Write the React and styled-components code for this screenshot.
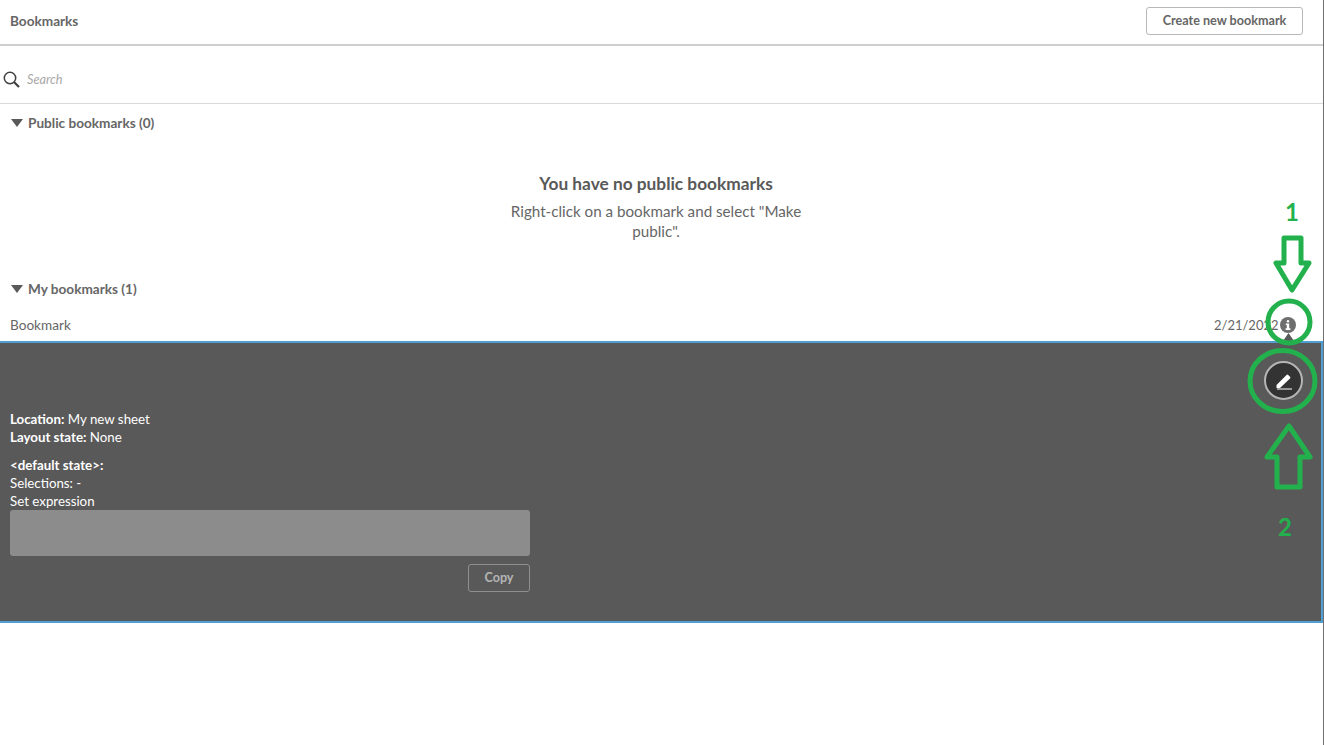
import React from "react";
import styled, { createGlobalStyle } from "styled-components";

const Global = createGlobalStyle`
  html, body { margin: 0; padding: 0; background: #fff; }
  body { font-family: "Lato", "Noto Sans", sans-serif; color: #595959; }
  * { box-sizing: border-box; }
`;

const Page = styled.div`
  position: relative;
  width: 1324px;
  height: 745px;
  overflow: hidden;
  background: #fff;
  border-right: 1px solid #6e6e6e;
`;

const Main = styled.div`
  width: 1323px;
  height: 100%;
  display: flex;
  flex-direction: column;
`;

const Header = styled.header`
  height: 46px;
  flex: none;
  display: flex;
  align-items: flex-start;
  justify-content: space-between;
  padding: 7px 20px 0 10px;
  border-bottom: 2px solid #cfcfcf;
`;

const Title = styled.h1`
  margin: 6px 0 0;
  font-size: 13.6px;
  line-height: 16px;
  font-weight: 700;
  color: #666;
`;

const CreateButton = styled.button`
  width: 157px;
  height: 28px;
  padding: 0;
  background: #fff;
  border: 1px solid #b8b8b8;
  border-radius: 3px;
  font: 700 12.6px/16px "Lato", sans-serif;
  color: #666;
`;

const SearchBar = styled.div`
  height: 58px;
  flex: none;
  display: flex;
  align-items: center;
  gap: 7px;
  padding: 9px 0 0 3px;
  border-bottom: 1px solid #d9d9d9;
`;

const SearchText = styled.span`
  font-size: 12.7px;
  font-style: italic;
  color: #a8a8a8;
`;

const Section = styled.section`
  display: flex;
  flex-direction: column;
`;

const SectionHead = styled.div`
  height: 20px;
  margin-top: ${(p) => p.$top || 0}px;
  display: flex;
  align-items: center;
  gap: 5px;
  padding-left: 11px;
  font-size: 13.6px;
  font-weight: 700;
  color: #666;
`;

const Caret = styled.span`
  width: 0;
  height: 0;
  border-left: 6px solid transparent;
  border-right: 6px solid transparent;
  border-top: 8px solid #595959;
`;

const Empty = styled.div`
  height: 146px;
  padding: 40px 11px 0 0;
  display: flex;
  flex-direction: column;
  align-items: center;
`;

const EmptyTitle = styled.div`
  font-size: 17.3px;
  line-height: 22px;
  font-weight: 700;
  color: #595959;
`;

const EmptyText = styled.div`
  width: 310px;
  margin-top: 6px;
  font-size: 15.2px;
  line-height: 20px;
  text-align: center;
  color: #666;
`;

const Row = styled.div`
  height: 33px;
  margin-top: 9px;
  flex: none;
  display: flex;
  align-items: center;
  justify-content: space-between;
  padding: 1px 27px 0 10px;
  font-size: 13.6px;
  color: #666;
  position: relative;
`;

const RowMeta = styled.div`
  display: flex;
  align-items: center;
`;

const RowDate = styled.span`
  width: 66px;
  font-size: 13px;
  white-space: nowrap;
`;

const InfoIcon = styled.span`
  width: 16px;
  height: 16px;
  border-radius: 50%;
  background: #6e6e6e;
  display: flex;
  align-items: center;
  justify-content: center;
`;

const Notch = styled.span`
  position: absolute;
  z-index: 1;
  left: 1283px;
  bottom: 0;
  width: 11px;
  height: 8px;
  background: #595959;
  clip-path: polygon(50% 0, 100% 100%, 0 100%);
`;

const Panel = styled.div`
  height: 282px;
  flex: none;
  background: #595959;
  border: solid #4f9fd3;
  border-width: 2px 2px 2px 0;
  position: relative;
  padding: 67px 0 0 10px;
  color: #fff;
  font-size: 13.3px;
  line-height: 18px;
`;

const EditButton = styled.button`
  position: absolute;
  right: 18px;
  top: 18px;
  width: 39px;
  height: 39px;
  padding: 0;
  border-radius: 50%;
  background: #333;
  border: 2px solid #b5b5b5;
  display: flex;
  align-items: center;
  justify-content: center;
`;

const Line = styled.div`
  white-space: nowrap;
`;

const Strong = styled.b`
  font-weight: 700;
`;

const Group = styled.div`
  margin-top: ${(p) => p.$gap || 0}px;
`;

const ExprBox = styled.div`
  width: 520px;
  height: 46px;
  background: #8c8c8c;
  border-radius: 3px;
`;

const CopyRow = styled.div`
  width: 520px;
  margin-top: 8px;
  display: flex;
  justify-content: flex-end;
`;

const CopyButton = styled.button`
  width: 62px;
  height: 28px;
  padding: 0;
  background: transparent;
  border: 1px solid #8f8f8f;
  border-radius: 3px;
  font: 700 12.6px/16px "Lato", sans-serif;
  color: #b5b5b5;
`;

const Overlay = styled.svg`
  position: absolute;
  inset: 0;
  z-index: 2;
  pointer-events: none;
`;

const Num = styled.span`
  position: absolute;
  z-index: 2;
  left: ${(p) => p.$x}px;
  top: ${(p) => p.$y}px;
  font-size: 24px;
  line-height: 28px;
  font-weight: 700;
  color: #22b14c;
`;

export default function App() {
  return (
    <Page>
      <Global />
      <Main>
        <Header>
          <Title>Bookmarks</Title>
          <CreateButton>Create new bookmark</CreateButton>
        </Header>
        <SearchBar>
          <svg width="17" height="17" viewBox="0 0 17 17" fill="none" stroke="#404040">
            <circle cx="7" cy="7" r="5.7" strokeWidth="1.5" />
            <path d="M11 11l5 5" strokeWidth="2.2" />
          </svg>
          <SearchText>Search</SearchText>
        </SearchBar>
        <Section>
          <SectionHead $top={9}>
            <Caret />
            Public bookmarks (0)
          </SectionHead>
          <Empty>
            <EmptyTitle>You have no public bookmarks</EmptyTitle>
            <EmptyText>Right-click on a bookmark and select "Make public".</EmptyText>
          </Empty>
        </Section>
        <Section>
          <SectionHead>
            <Caret />
            My bookmarks (1)
          </SectionHead>
          <Row>
            <span>Bookmark</span>
            <RowMeta>
              <RowDate>2/21/2022</RowDate>
              <InfoIcon>
                <svg width="8" height="10" viewBox="0 0 8 10" fill="#fff">
                  <circle cx="4" cy="1.3" r="1.2" />
                  <path d="M1.8 3.4h3.4v4.8h1.2V10H1.6V8.2h1.2V5H1.8z" />
                </svg>
              </InfoIcon>
            </RowMeta>
            <Notch />
          </Row>
        </Section>
        <Panel>
          <EditButton>
            <svg width="18" height="18" viewBox="0 0 18 18">
              <path d="M1.5 13L11.5 3a1.2 1.2 0 0 1 1.7 0l1.8 1.8a1.2 1.2 0 0 1 0 1.7L5 16H1.5z" fill="#fff" />
              <path d="M2 17h15" stroke="#fff" strokeWidth="1" />
            </svg>
          </EditButton>
          <Line><Strong>Location:</Strong> My new sheet</Line>
          <Line><Strong>Layout state:</Strong> None</Line>
          <Group $gap={10}>
            <Line><Strong>&lt;default state&gt;:</Strong></Line>
            <Line>Selections: -</Line>
            <Line>Set expression</Line>
          </Group>
          <ExprBox />
          <CopyRow>
            <CopyButton>Copy</CopyButton>
          </CopyRow>
        </Panel>
      </Main>
      <Overlay width="1324" height="745" viewBox="0 0 1324 745" fill="none" stroke="#22b14c" strokeWidth="5">
        <path d="M1284 238h17v25h8l-17 27-16-27h8z" strokeLinejoin="round" />
        <ellipse cx="1289" cy="322" rx="21" ry="21" />
        <ellipse cx="1282.5" cy="381" rx="32.5" ry="30.5" />
        <path d="M1289 426l21 31h-10v30h-23v-30h-10z" strokeLinejoin="round" />
      </Overlay>
      <Num $x={1285} $y={198}>1</Num>
      <Num $x={1278} $y={513}>2</Num>
    </Page>
  );
}
